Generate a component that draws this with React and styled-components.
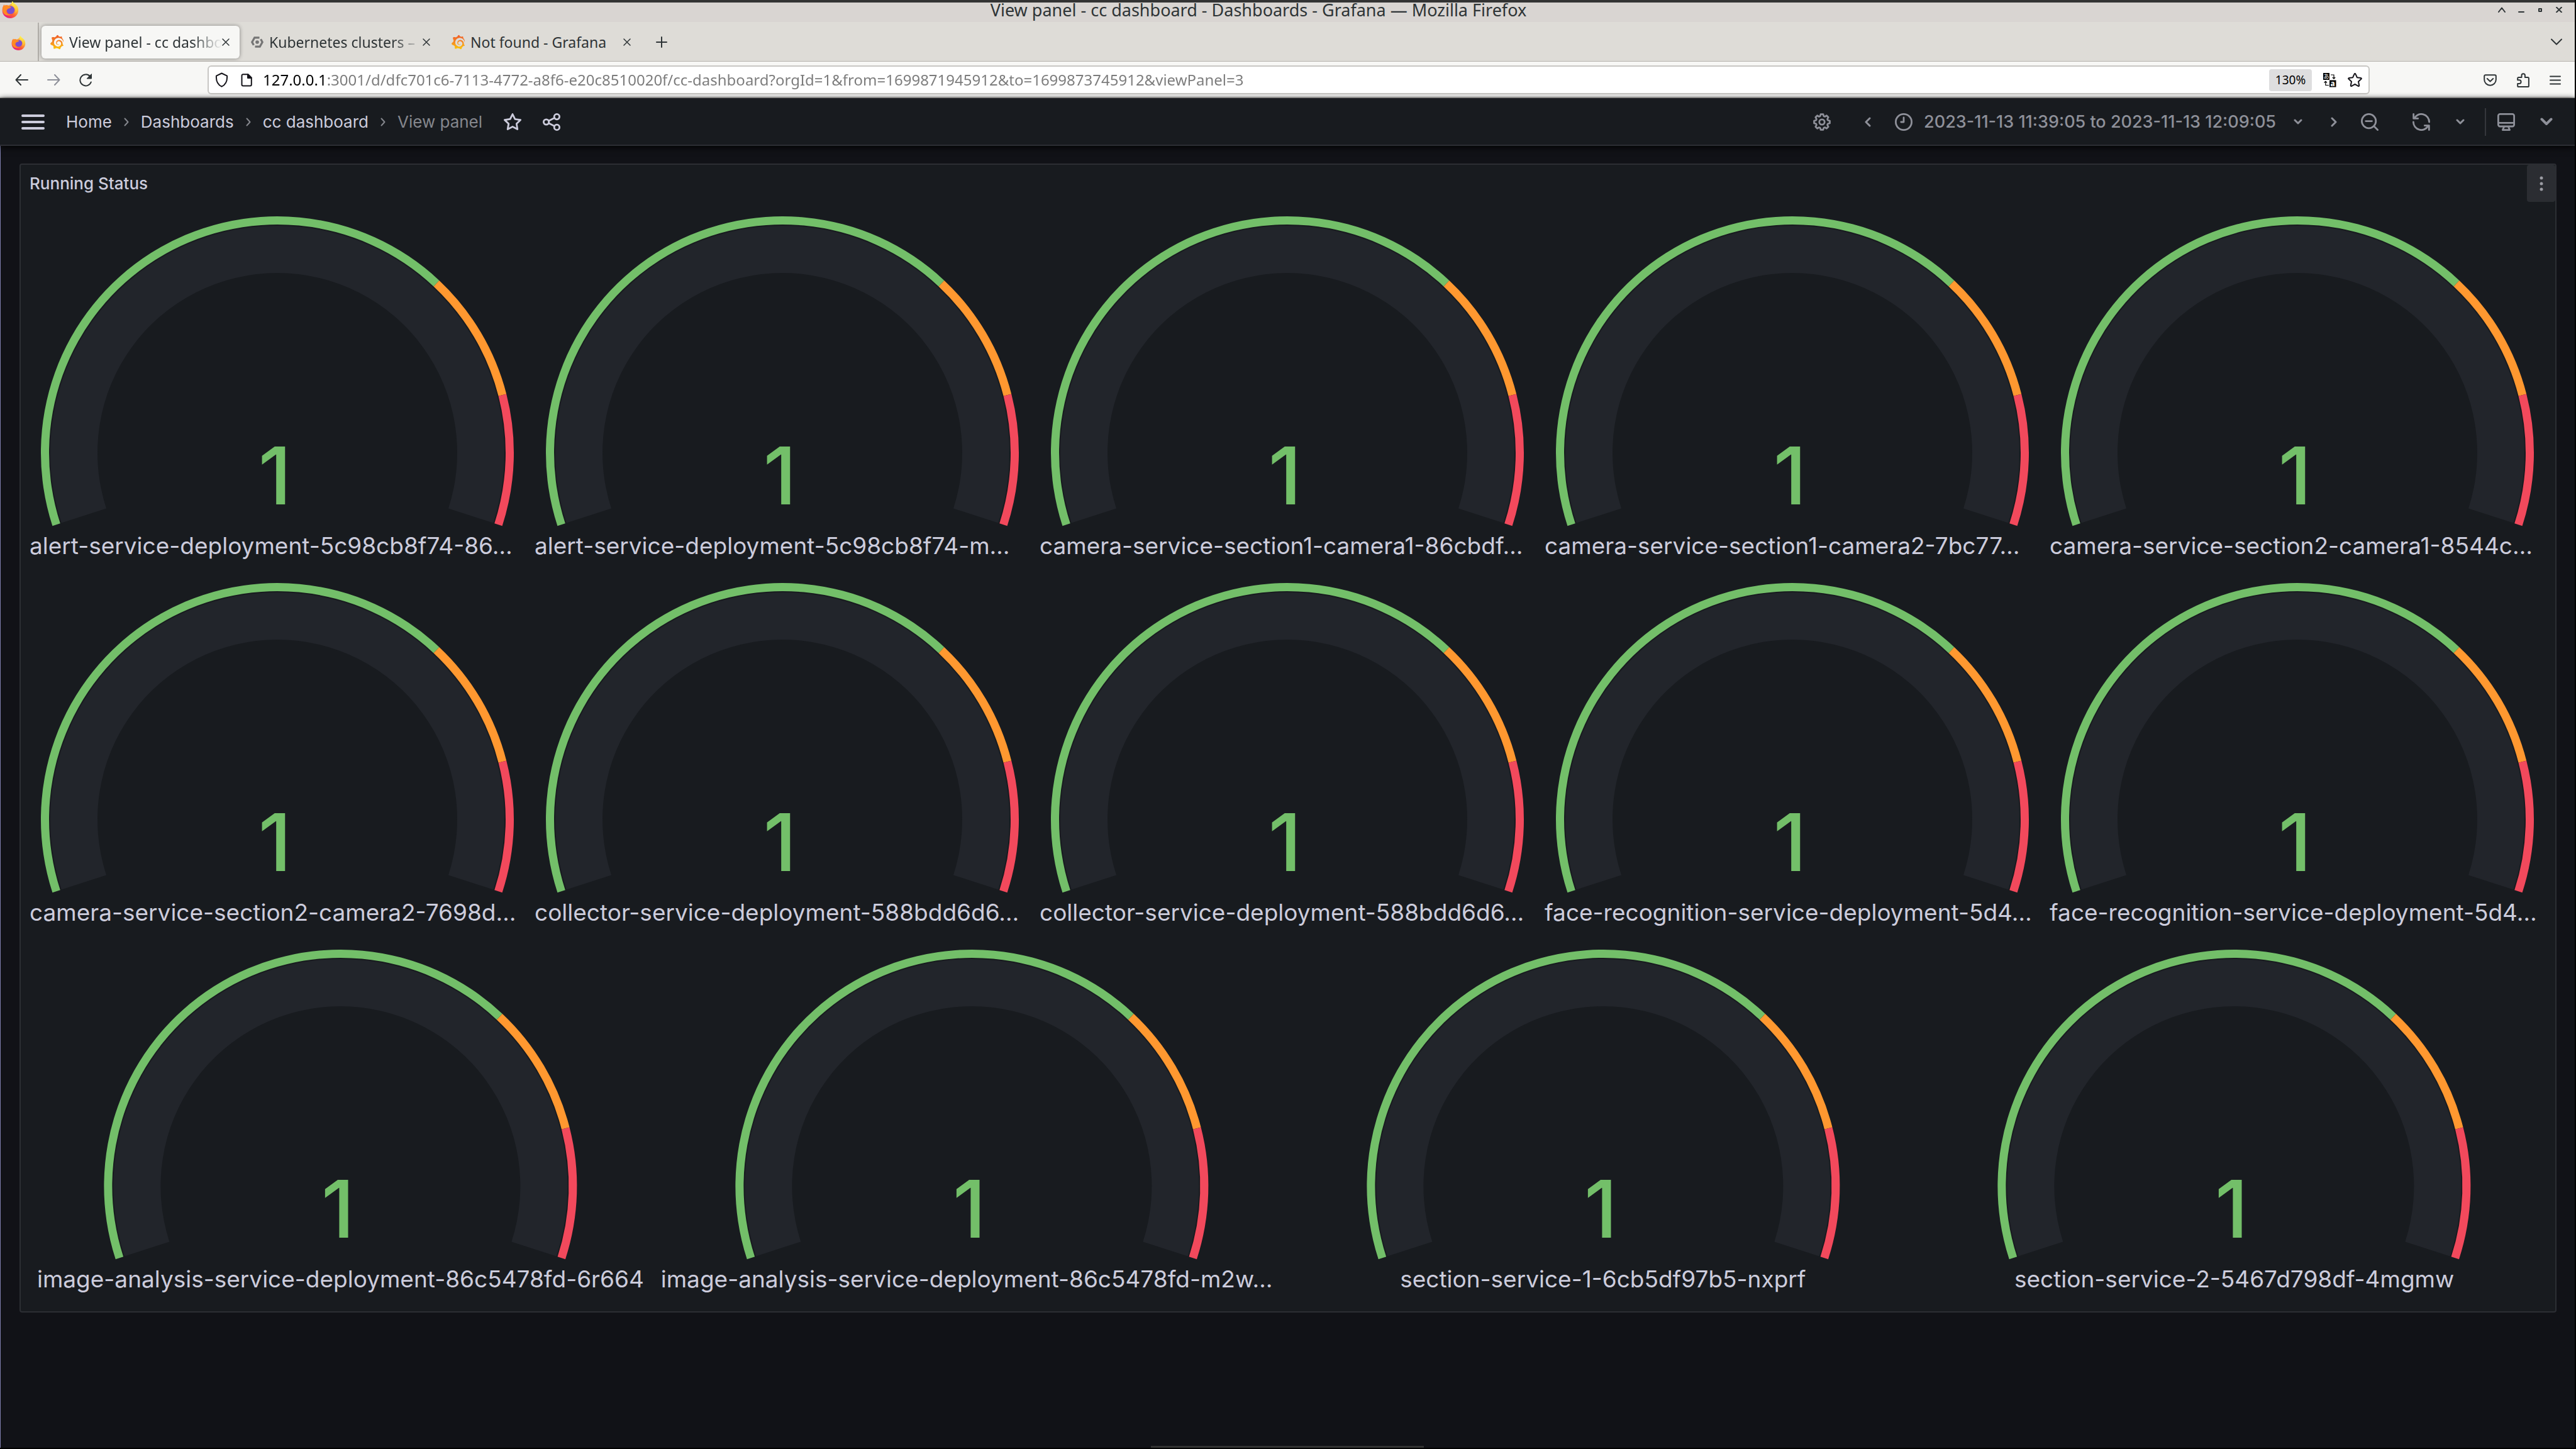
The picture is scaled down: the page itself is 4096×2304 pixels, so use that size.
import React from 'react';
import styled, { createGlobalStyle } from 'styled-components';
import { SiGrafana } from 'react-icons/si';

const GlobalStyle = createGlobalStyle`
  *, *::before, *::after { box-sizing: border-box; }
  html, body { margin: 0; background: #111217; }
  button, input { margin: 0; padding: 0; border: 0; background: none; font: inherit; color: inherit; }
  button { cursor: pointer; }
  svg { display: block; flex: none; }
`;

const chromeFont = '"Noto Sans", "Open Sans", sans-serif';
const appFont = 'Inter, "Liberation Sans", sans-serif';

/* ---------- window frame ---------- */

const Window = styled.div`
  display: flex;
  flex-direction: column;
  min-height: 100vh;
  border: solid #000;
  border-width: 0 2px 0 0;
  box-shadow: inset 1px 0 0 #7f7fae;
`;

const ScreenEdge = styled.div`
  height: 4px;
  background: #333;
`;

const TitleBar = styled.header`
  display: flex;
  align-items: center;
  height: 31px;
  padding: 0 20px 8px 3px;
  background: #d9d5d2;
  color: #2e3436;
  font-family: ${chromeFont};
`;

const WindowTitle = styled.h1`
  flex: 1;
  margin: 0;
  font-size: 27px;
  font-weight: 400;
  line-height: 23px;
  text-align: center;
`;

const WindowButtons = styled.div`
  display: flex;
  justify-content: flex-end;
  align-items: center;
  gap: 20px;
`;

const TabStrip = styled.div`
  display: flex;
  align-items: center;
  height: 63px;
  padding: 1px 20px 0 0;
  background: #dedcd7;
  border-bottom: 1px solid #b6b3ae;
  color: #2e3436;
  font-family: ${chromeFont};
`;

const PinnedTab = styled.button`
  display: flex;
  align-items: center;
  align-self: stretch;
  width: 62px;
  padding: 3px 0 0 18px;
  border-right: 2px solid #b3b0ab;
`;

const Tab = styled.div`
  display: flex;
  align-items: center;
  width: 315px;
  height: 52px;
  margin: 0 0 0 4px;
  padding: 0 16px 0 13px;
  border-radius: 6px;
  background: ${(p) => (p.$active ? '#f7f7f5' : 'transparent')};
  box-shadow: ${(p) => (p.$active ? '0 0 6px rgba(0, 0, 0, 0.4)' : 'none')};
`;

const TabLabel = styled.button`
  display: flex;
  flex: 1;
  align-items: center;
  gap: 8px;
  min-width: 0;
  text-align: left;
`;

const TabText = styled.span`
  flex: 1;
  overflow: hidden;
  font-size: 23px;
  line-height: 32px;
  white-space: nowrap;
  mask-image: ${(p) => (p.$fade ? 'linear-gradient(90deg, #000 80%, transparent)' : 'none')};
`;

const TabTail = styled.div`
  display: flex;
  flex: 1;
  align-items: center;
  justify-content: space-between;
  padding-left: 24px;
`;

const NavBar = styled.div`
  display: flex;
  align-items: center;
  height: 58px;
  padding: 2px 22px 0 24px;
  background: #f7f7f5;
  border-bottom: 2px solid #c8c7c4;
  color: #2e3436;
  font-family: ${chromeFont};
`;

const NavButtons = styled.div`
  display: flex;
  gap: 30px;
  width: 306px;
`;

const UrlBar = styled.label`
  display: flex;
  flex: 1;
  align-items: center;
  height: 46px;
  margin-right: 181px;
  padding: 0 10px;
  border: 2px solid #c8c7c4;
  border-radius: 6px;
  background: #fff;
  color: #15141a;
`;

const UrlInput = styled.input`
  flex: 1;
  min-width: 0;
  margin: 0 17px;
  font-size: 24px;
  line-height: 34px;
  outline: none;
  color: transparent;
  background: linear-gradient(90deg, #000 102px, #7b7b7b 102px);
  background-clip: text;
  -webkit-background-clip: text;
`;

const ZoomBadge = styled.button`
  width: 68px;
  height: 35px;
  margin-right: 18px;
  border-radius: 4px;
  background: #dededf;
  color: #000;
  font-size: 19px;
  line-height: 35px;
`;

const Row = styled.div`
  display: flex;
  align-items: center;
  gap: ${(p) => p.$gap}px;
`;

/* ---------- dashboard ---------- */

const AppHeader = styled.nav`
  display: flex;
  align-items: center;
  justify-content: space-between;
  height: 76px;
  padding: 1px 35px 0 34px;
  border-bottom: 2px solid #2c2e33;
  background: #181b1f;
  box-shadow: 0 2px 10px #000;
  color: #ccccdc;
  font-family: ${appFont};
  font-size: 26px;
  line-height: 36px;
`;

const Crumb = styled.a`
  color: ${(p) => (p.$current ? '#85878d' : '#ccccdc')};
  text-decoration: none;
`;

const IconButton = styled.button`
  display: flex;
  align-items: center;
  color: ${(p) => (p.$bright ? '#ccccdc' : '#8e9099')};
`;

const TimePicker = styled.button`
  display: flex;
  align-items: center;
  gap: 18px;
  padding-right: 7px;
  color: #8e9099;
  font-size: 27px;
  font-weight: 500;
  svg:last-child { margin-left: 10px; }
`;

const Divider = styled.span`
  width: 2px;
  height: 44px;
  background: #35373c;
`;

const Main = styled.main`
  flex: 1;
  padding: 28px 29px 28px 31px;
`;

const Panel = styled.section`
  border: 2px solid #2c2e33;
  border-radius: 4px;
  background: #181b1f;
  color: #ccccdc;
  font-family: ${appFont};
`;

const PanelHeader = styled.div`
  display: flex;
  align-items: center;
  justify-content: space-between;
  height: 59px;
  padding-left: 14px;
`;

const PanelTitle = styled.h2`
  margin: 0;
  font-size: 26px;
  font-weight: 500;
  line-height: 40px;
`;

const PanelMenu = styled.button`
  display: grid;
  place-items: center;
  width: 45px;
  height: 59px;
  border-radius: 4px;
  background: #2b2d32;
  color: #9b9ca3;
`;

const PanelBody = styled.div`
  display: grid;
  gap: 15px;
  padding: 15px 16px 15px 14px;
`;

const GaugeRow = styled.div`
  display: grid;
  grid-auto-flow: column;
  grid-auto-columns: minmax(0, 1fr);
  gap: 15px;
`;

const Gauge = styled.figure`
  margin: 0;
`;

const GaugeSvg = styled.svg`
  width: 100%;
  height: 506px;
`;

const GaugeLabel = styled.figcaption`
  padding-bottom: 10px;
  font-size: 37px;
  line-height: 52px;
  text-align: ${(p) => (p.$clipped ? 'left' : 'center')};
  white-space: nowrap;
`;

const Dock = styled.div`
  width: 434px;
  height: 3px;
  margin: 0 auto;
  background: #333;
`;

const BottomEdge = styled.div`
  height: 2px;
  background: #000;
`;

/* ---------- icons ---------- */

const Line = ({ w, h, box, sw = 2, children }) => (
  <svg width={w} height={h} viewBox={box || `0 0 ${w} ${h}`} fill="none" stroke="currentColor"
    strokeWidth={sw} strokeLinecap="round" strokeLinejoin="round" aria-hidden="true">
    {children}
  </svg>
);

const FirefoxLogo = ({ size, id }) => (
  <svg width={size} height={size} viewBox="0 0 32 32" aria-hidden="true">
    <defs>
      <linearGradient id={`${id}-body`} x1="0.85" y1="0.1" x2="0.2" y2="0.95">
        <stop offset="0" stopColor="#fff44f" />
        <stop offset="0.35" stopColor="#ffa436" />
        <stop offset="0.65" stopColor="#ff5a36" />
        <stop offset="1" stopColor="#e31587" />
      </linearGradient>
      <linearGradient id={`${id}-tail`} x1="0" y1="0" x2="0" y2="1">
        <stop offset="0" stopColor="#fff44f" />
        <stop offset="1" stopColor="#ffb32c" />
      </linearGradient>
    </defs>
    <path d="M20 0c1 3 3 4.500 6 7.500C30 11 31.500 14 31 18.500 30 26.500 24 32 16 32S1 26 .8 18C.6 13 2 9 4.500 6c0 1.500.2 2.300.8 3C7 7.500 9.500 7 12 8c3-.8 6-3 8-8z" fill={`url(#${id}-body)`} />
    <circle cx="16.500" cy="16.500" r="7.500" fill="#7a4fd0" />
    <path d="M20 0c-3 4-1.500 7 1.500 9.500 4 3.500 5.500 8 2.500 13 5-2.500 7.500-8 5.500-12.500C28 7 22 4 20 0z" fill={`url(#${id}-tail)`} />
    <path d="M2.500 9.500C6 6.500 10 7 12.500 9c1 1 3 1.500 5 1.700-.5 2-3 2.500-4.500 3-2 .8-4 2-4.500 4.800.2 5 5 7.500 9.500 6.500-7 4.500-17 0-16.700-8 .1-3 .4-5.500 1.200-7.500z" fill="#ff8a24" />
  </svg>
);

const GrafanaLogo = ({ id }) => (
  <svg width="23" height="24" viewBox="0 0 24 24" aria-hidden="true">
    <defs>
      <linearGradient id={id} x1="0" y1="0" x2="0" y2="1">
        <stop offset="0" stopColor="#f05a28" />
        <stop offset="0.5" stopColor="#f68a24" />
        <stop offset="1" stopColor="#fbca0a" />
      </linearGradient>
    </defs>
    <SiGrafana size={24} fill={`url(#${id})`} />
  </svg>
);

const KubernetesLogo = () => (
  <svg width="22" height="20" viewBox="-1 0 22 20" fill="none" stroke="#757575" strokeWidth="3.200" aria-hidden="true">
    <path d="M13.500 2.800H5.800L1.800 10l2.600 4.800" />
    <path d="M6.500 17.200h7.700l4-7.200-2.600-4.800" />
    <circle cx="10" cy="10" r="2.800" fill="#757575" stroke="none" />
  </svg>
);

const CloseIcon = () => <Line w={12} h={12} sw={1.5}><path d="M1 1l10 10M11 1L1 11" /></Line>;
const BackIcon = () => <Line w={21} h={18}><path d="M20 9H1.500M9 1L1.500 9 9 17" /></Line>;
const ForwardIcon = () => <Line w={21} h={18}><path d="M1 9h18.500M12 1l7.500 8-7.500 8" /></Line>;
const ReloadIcon = () => (
  <Line w={21} h={21}>
    <path d="M18.800 13.500A9 9 0 1 1 17 4.300" />
    <path d="M19.500 1v7h-7z" fill="currentColor" strokeWidth="1" />
  </Line>
);
const ShieldIcon = () => (
  <Line w={21} h={24}><path d="M10.500 1.500l8.500 4.200c.6 7.500-1.500 13.500-8.500 17C3.500 19.200 1.400 13.200 2 5.700z" /></Line>
);
const PageIcon = () => (
  <Line w={18} h={21}>
    <path d="M3.500 1.200h8L16.800 6.500v11a2 2 0 0 1-2 2H3.500a2 2 0 0 1-2-2V3.200a2 2 0 0 1 2-2z" />
    <path d="M11 1.500V7h5.500z" fill="currentColor" />
  </Line>
);
const TranslateIcon = () => (
  <svg width="21" height="23" viewBox="0 0 21 23" aria-hidden="true">
    <rect width="10" height="11" fill="#000" />
    <rect x="10" y="11.500" width="10.500" height="11" fill="#000" />
    <text x="5" y="9" fontSize="9" fill="#fff" textAnchor="middle" fontFamily='"Noto Sans CJK JP", sans-serif'>あ</text>
    <text x="15.200" y="20.500" fontSize="12" fontWeight="700" fill="#fff" textAnchor="middle" fontFamily='"Noto Sans", sans-serif'>a</text>
    <path d="M12 3h5v6M14.800 7l2.200 2.200L19.200 7M9 19.500H3.800v-6M1.600 15.500l2.200-2.200L6 15.500" fill="none" stroke="#000" strokeWidth="1.200" />
  </svg>
);
const BookmarkIcon = () => (
  <Line w={23} h={22}>
    <path d="M10.600 1.600c.3-.8 1.500-.8 1.800 0l2.500 5.600 6 .7c.9.1 1.200 1.100.6 1.700l-4.500 4.200 1.200 6c.1.900-.7 1.400-1.500 1l-5.200-3-5.200 3c-.8.4-1.600-.1-1.500-1l1.200-6L1.500 9.600c-.6-.6-.3-1.600.6-1.700l6-.7z" />
  </Line>
);
const PocketIcon = () => (
  <Line w={21} h={19}>
    <path d="M3 1.200h15a1.800 1.800 0 0 1 1.800 1.800v5.500a9.300 9.300 0 0 1-18.600 0V3A1.800 1.800 0 0 1 3 1.200z" />
    <path d="M5.800 7l4.700 4.500L15.200 7" />
  </Line>
);
const PuzzleIcon = () => (
  <Line w={20} h={23}>
    <path d="M7.500 7V4a2.700 2.700 0 0 1 5.400 0v3h4.400a1.600 1.600 0 0 1 1.600 1.600v11.800a1.600 1.600 0 0 1-1.600 1.600H2.800a1.600 1.600 0 0 1-1.600-1.600V17h2.500a2.900 2.900 0 0 0 0-5.800H1.200V8.600A1.600 1.600 0 0 1 2.800 7z" />
  </Line>
);
const AppMenuIcon = () => <Line w={18} h={15}><path d="M1 1.500h16M1 7.500h16M1 13.500h16" /></Line>;

const MenuIcon = () => <Line w={37} h={24} sw={4}><path d="M2 2h33M2 12h33M2 22h33" /></Line>;
const CrumbArrow = () => (
  <Line w={8} h={14} sw={2}><path d="M1.500 1.500L6.500 7l-5 5.500" stroke="#85878d" /></Line>
);
const StarIcon = () => (
  <svg width="28" height="27" viewBox="2 2.4 20 19.200" fill="currentColor" aria-hidden="true">
    <path d="M22,9.670A1,1,0,0,0,21.140,9l-5.690-.83L12.900,3a1,1,0,0,0-1.800,0L8.550,8.160,2.860,9a1,1,0,0,0-.81.680,1,1,0,0,0,.25,1l4.130,4-1,5.680A1,1,0,0,0,6.900,21.440L12,18.770l5.100,2.670a.93.930,0,0,0,.46.120,1,1,0,0,0,.59-.19,1,1,0,0,0,.4-1l-1-5.680,4.130-4A1,1,0,0,0,22,9.670Zm-6.150,4a1,1,0,0,0-.29.880l.72,4.200-3.760-2a1.060,1.060,0,0,0-.94,0l-3.760,2,.72-4.200a1,1,0,0,0-.29-.88l-3-3,4.210-.61a1,1,0,0,0,.76-.55L12,5.700l1.880,3.820a1,1,0,0,0,.76.550l4.210.610Z" />
  </svg>
);
const ShareIcon = () => (
  <Line w={28} h={28} box="2 2 20 20">
    <circle cx="18" cy="6" r="3" /><circle cx="6" cy="12" r="3" /><circle cx="18" cy="18" r="3" />
    <path d="M8.700 10.700l6.600-3.300M8.700 13.300l6.600 3.300" />
  </Line>
);
const GEAR_PATH = (() => {
  const pts = [];
  for (let i = 0; i < 8; i += 1) {
    [[-9, 9], [9, 9], [15, 7.2], [22.5, 6.8], [30, 7.2]].forEach(([d, r]) => {
      const a = ((i * 45 + d) * Math.PI) / 180;
      pts.push(`${(12 + r * Math.sin(a)).toFixed(2)} ${(12 - r * Math.cos(a)).toFixed(2)}`);
    });
  }
  return `M${pts.join('L')}Z`;
})();
const GearIcon = () => (
  <Line w={28} h={28} box="2 2 20 20"><path d={GEAR_PATH} /><circle cx="12" cy="12" r="3" /></Line>
);
const ClockIcon = () => (
  <Line w={28} h={28} box="2 2 20 20"><circle cx="12" cy="12" r="9" /><path d="M12 7v5H9" /></Line>
);
const ArrowIcon = ({ flip }) => (
  <Line w={10} h={16} sw={3}><path d={flip ? 'M8 2L2 8l6 6' : 'M2 2l6 6-6 6'} /></Line>
);
const DownIcon = () => <Line w={14} h={9} sw={3}><path d="M2 2l5 5 5-5" /></Line>;
const BigDownIcon = () => <Line w={20} h={13} sw={4}><path d="M2.500 2.500L10 10l7.500-7.500" /></Line>;
const ZoomOutIcon = () => (
  <Line w={28} h={28} box="2 2 20 20"><circle cx="11" cy="11" r="8" /><path d="M21 21l-4.300-4.300M7.500 11h7" /></Line>
);
const RefreshIcon = () => (
  <Line w={28} h={28} box="2 2 20 20">
    <path d="M4.200 7.500A9 9 0 0 1 21 12M3.200 3v5h5" /><path d="M19.800 16.500A9 9 0 0 1 3 12M20.800 21v-5h-5" />
  </Line>
);
const MonitorIcon = () => (
  <Line w={28} h={28} box="2 2 20 20">
    <rect x="3" y="3" width="18" height="14" rx="2" /><path d="M3 13h18M9.500 17.500L8 21h8l-1.500-3.500" />
  </Line>
);

/* ---------- gauge ---------- */

const SWEEP_START = 198;
const SWEEP = 216;
const point = (fraction, radius) => {
  const a = ((SWEEP_START - SWEEP * fraction) * Math.PI) / 180;
  return `${(radius * Math.cos(a)).toFixed(2)} ${(-radius * Math.sin(a)).toFixed(2)}`;
};
const arc = (from, to, outer, inner) => {
  const large = (to - from) * SWEEP > 180 ? 1 : 0;
  return `M${point(from, outer)}A${outer} ${outer} 0 ${large} 1 ${point(to, outer)}`
    + `L${point(to, inner)}A${inner} ${inner} 0 ${large} 0 ${point(from, inner)}Z`;
};

const thresholds = [
  { from: 0, to: 0.7, color: '#73bf69' },
  { from: 0.7, to: 0.85, color: '#ff9830' },
  { from: 0.85, to: 1, color: '#f2495c' },
];

const StatusGauge = ({ name, value }) => (
  <Gauge>
    <GaugeSvg viewBox="-394 -384 788 506">
      <path d={arc(0, 1, 361, 286)} fill="#22252b" />
      {thresholds.map((t) => (
        <path key={t.color} d={arc(t.from, t.to, 376, 363)} fill={t.color} />
      ))}
      <text x="-4" y="82" textAnchor="middle" fontFamily={appFont} fontSize="127" fontWeight="500" fill="#73bf69">
        {value}
      </text>
    </GaugeSvg>
    <GaugeLabel $clipped={name.endsWith('…')}>{name}</GaugeLabel>
  </Gauge>
);

const rows = [
  [
    'alert-service-deployment-5c98cb8f74-86…',
    'alert-service-deployment-5c98cb8f74-m…',
    'camera-service-section1-camera1-86cbdf…',
    'camera-service-section1-camera2-7bc77…',
    'camera-service-section2-camera1-8544c…',
  ],
  [
    'camera-service-section2-camera2-7698d…',
    'collector-service-deployment-588bdd6d6…',
    'collector-service-deployment-588bdd6d6…',
    'face-recognition-service-deployment-5d4…',
    'face-recognition-service-deployment-5d4…',
  ],
  [
    'image-analysis-service-deployment-86c5478fd-6r664',
    'image-analysis-service-deployment-86c5478fd-m2w…',
    'section-service-1-6cb5df97b5-nxprf',
    'section-service-2-5467d798df-4mgmw',
  ],
];

const tabs = [
  { title: 'View panel - cc dashbo', icon: <GrafanaLogo id="grafana-a" />, active: true, fade: true },
  { title: 'Kubernetes clusters –', icon: <KubernetesLogo />, fade: true },
  { title: 'Not found - Grafana', icon: <GrafanaLogo id="grafana-b" /> },
];

export default function App() {
  return (
    <>
      <GlobalStyle />
      <Window>
        <ScreenEdge />
        <TitleBar>
          <FirefoxLogo size={27} id="fx-title" />
          <WindowTitle>View panel - cc dashboard - Dashboards - Grafana — Mozilla Firefox</WindowTitle>
          <WindowButtons>
            <button aria-label="Shade"><Line w={12} h={9}><path d="M1 8l5-6.500L11 8" /></Line></button>
            <button aria-label="Minimize"><Line w={10} h={9}><path d="M1 8h8" /></Line></button>
            <button aria-label="Maximize"><Line w={10} h={9}><path d="M3 3h4v4H3z" /></Line></button>
            <button aria-label="Close window"><Line w={10} h={9}><path d="M1 .5l8 8M9 .5l-8 8" /></Line></button>
          </WindowButtons>
        </TitleBar>

        <TabStrip>
          <PinnedTab aria-label="Pinned tab"><FirefoxLogo size={23} id="fx-pin" /></PinnedTab>
          {tabs.map((t) => (
            <Tab key={t.title} $active={t.active}>
              <TabLabel>{t.icon}<TabText $fade={t.fade}>{t.title}</TabText></TabLabel>
              <button aria-label={`Close ${t.title}`}><CloseIcon /></button>
            </Tab>
          ))}
          <TabTail>
            <button aria-label="New tab"><Line w={18} h={18}><path d="M9 1v16M1 9h16" /></Line></button>
            <button aria-label="List all tabs"><Line w={18} h={11}><path d="M1 1.500l8 8 8-8" /></Line></button>
          </TabTail>
        </TabStrip>

        <NavBar>
          <NavButtons>
            <button aria-label="Back"><BackIcon /></button>
            <IconButton aria-label="Forward"><ForwardIcon /></IconButton>
            <button aria-label="Reload"><ReloadIcon /></button>
          </NavButtons>
          <UrlBar>
            <Row $gap={20}><ShieldIcon /><PageIcon /></Row>
            <UrlInput
              type="text"
              aria-label="Address"
              defaultValue="127.0.0.1:3001/d/dfc701c6-7113-4772-a8f6-e20c8510020f/cc-dashboard?orgId=1&from=1699871945912&to=1699873745912&viewPanel=3"
            />
            <ZoomBadge>130%</ZoomBadge>
            <Row $gap={18}>
              <button aria-label="Translate page"><TranslateIcon /></button>
              <button aria-label="Bookmark"><BookmarkIcon /></button>
            </Row>
          </UrlBar>
          <Row $gap={32}>
            <button aria-label="Save to Pocket"><PocketIcon /></button>
            <button aria-label="Extensions"><PuzzleIcon /></button>
            <button aria-label="Application menu"><AppMenuIcon /></button>
          </Row>
        </NavBar>

        <AppHeader>
          <Row $gap={34}>
            <IconButton $bright aria-label="Open menu"><MenuIcon /></IconButton>
            <Row $gap={19}>
              <Crumb href="#home">Home</Crumb>
              <CrumbArrow />
              <Crumb href="#dashboards">Dashboards</Crumb>
              <CrumbArrow />
              <Crumb href="#cc-dashboard">cc dashboard</Crumb>
              <CrumbArrow />
              <Crumb href="#view-panel" $current>View panel</Crumb>
            </Row>
            <IconButton $bright aria-label="Mark as favorite"><StarIcon /></IconButton>
            <IconButton $bright aria-label="Share dashboard"><ShareIcon /></IconButton>
          </Row>
          <Row $gap={54}>
            <IconButton aria-label="Dashboard settings"><GearIcon /></IconButton>
            <Row $gap={38}>
              <IconButton aria-label="Move time range backwards"><ArrowIcon flip /></IconButton>
              <TimePicker>
                <ClockIcon />
                2023-11-13 11:39:05 to 2023-11-13 12:09:05
                <DownIcon />
              </TimePicker>
              <IconButton aria-label="Move time range forwards"><ArrowIcon /></IconButton>
              <IconButton aria-label="Zoom out time range"><ZoomOutIcon /></IconButton>
            </Row>
            <Row $gap={32}>
              <Row $gap={41}>
                <IconButton aria-label="Refresh dashboard"><RefreshIcon /></IconButton>
                <IconButton aria-label="Refresh interval"><DownIcon /></IconButton>
              </Row>
              <Row $gap={18}>
                <Divider />
                <Row $gap={40}>
                  <IconButton aria-label="Cycle view mode"><MonitorIcon /></IconButton>
                  <IconButton aria-label="Toggle top bar"><BigDownIcon /></IconButton>
                </Row>
              </Row>
            </Row>
          </Row>
        </AppHeader>

        <Main>
          <Panel>
            <PanelHeader>
              <PanelTitle>Running Status</PanelTitle>
              <PanelMenu aria-label="Panel menu">
                <svg width="6" height="24" viewBox="0 0 6 24" fill="currentColor" aria-hidden="true">
                  <circle cx="3" cy="3" r="2.500" /><circle cx="3" cy="12" r="2.500" /><circle cx="3" cy="21" r="2.500" />
                </svg>
              </PanelMenu>
            </PanelHeader>
            <PanelBody>
              {rows.map((names, r) => (
                <GaugeRow key={r}>
                  {names.map((name, i) => <StatusGauge key={i} name={name} value={1} />)}
                </GaugeRow>
              ))}
            </PanelBody>
          </Panel>
        </Main>
        <Dock />
        <BottomEdge />
      </Window>
    </>
  );
}
